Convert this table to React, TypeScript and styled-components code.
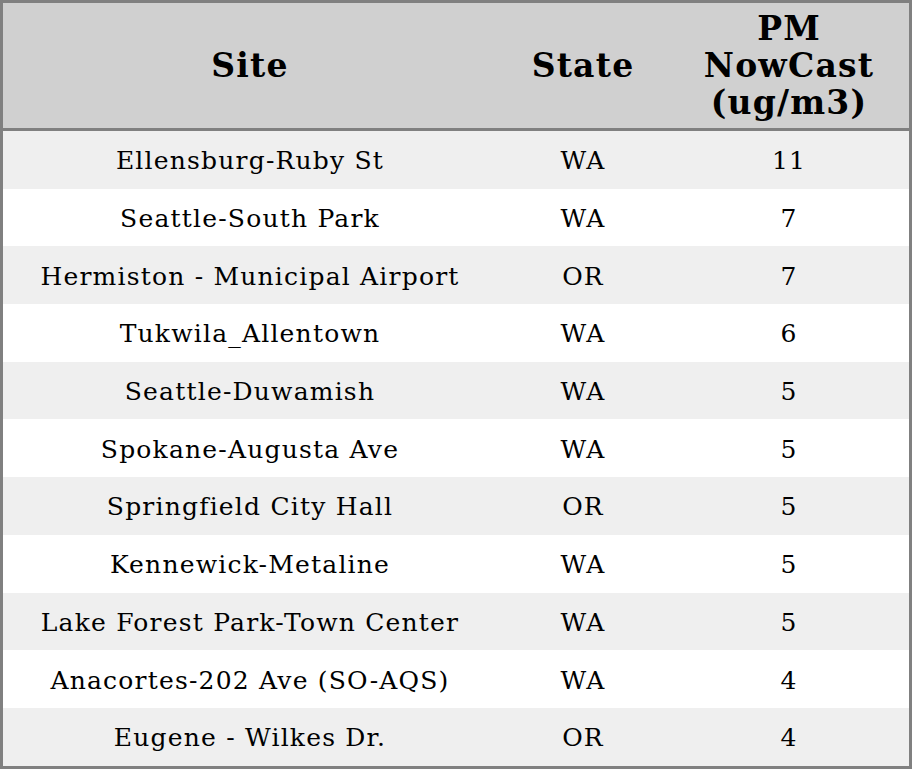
import styled, { createGlobalStyle } from "styled-components";

const GlobalStyle = createGlobalStyle`
  html, body {
    margin: 0;
    padding: 0;
    background: #ffffff;
  }
  body {
    font-family: "DejaVu Serif", "Liberation Serif", serif;
  }
`;

const Table = styled.table`
  width: 912px;
  border-collapse: separate;
  border-spacing: 0;
  border: 3px solid #808080;
  box-sizing: border-box;
  table-layout: fixed;
  font-family: "DejaVu Serif", "Liberation Serif", serif;
  font-variant-ligatures: none;
  color: #000;
`;

const HeadCell = styled.th<{ $w: number }>`
  width: ${(p) => p.$w - 8}px;
  height: 125px;
  padding: 0 4px;
  background: #d0d0d0;
  border-bottom: 3px solid #808080;
  font-size: 33px;
  letter-spacing: 1.2px;
  font-weight: bold;
  line-height: 37px;
  text-align: center;
  vertical-align: middle;
`;

const Row = styled.tr<{ $striped: boolean }>`
  height: 57.7px;
  background: ${(p) => (p.$striped ? "#efefef" : "#ffffff")};
`;

const Cell = styled.td`
  padding: 2px 4px 0;
  font-size: 25px;
  letter-spacing: 1.2px;
  text-align: center;
  vertical-align: middle;
  white-space: nowrap;
`;

const rows: [string, string, number][] = [
  ["Ellensburg-Ruby St", "WA", 11],
  ["Seattle-South Park", "WA", 7],
  ["Hermiston - Municipal Airport", "OR", 7],
  ["Tukwila_Allentown", "WA", 6],
  ["Seattle-Duwamish", "WA", 5],
  ["Spokane-Augusta Ave", "WA", 5],
  ["Springfield City Hall", "OR", 5],
  ["Kennewick-Metaline", "WA", 5],
  ["Lake Forest Park-Town Center", "WA", 5],
  ["Anacortes-202 Ave (SO-AQS)", "WA", 4],
  ["Eugene - Wilkes Dr.", "OR", 4],
];

export default function App() {
  return (
    <>
      <GlobalStyle />
      <Table>
        <thead>
          <tr>
            <HeadCell $w={494}>Site</HeadCell>
            <HeadCell $w={172}>State</HeadCell>
            <HeadCell $w={240}>
              PM
              <br />
              NowCast
              <br />
              (ug/m3)
            </HeadCell>
          </tr>
        </thead>
        <tbody>
          {rows.map(([site, state, value], i) => (
            <Row key={site} $striped={i % 2 === 0}>
              <Cell>{site}</Cell>
              <Cell>{state}</Cell>
              <Cell>{value}</Cell>
            </Row>
          ))}
        </tbody>
      </Table>
    </>
  );
}
